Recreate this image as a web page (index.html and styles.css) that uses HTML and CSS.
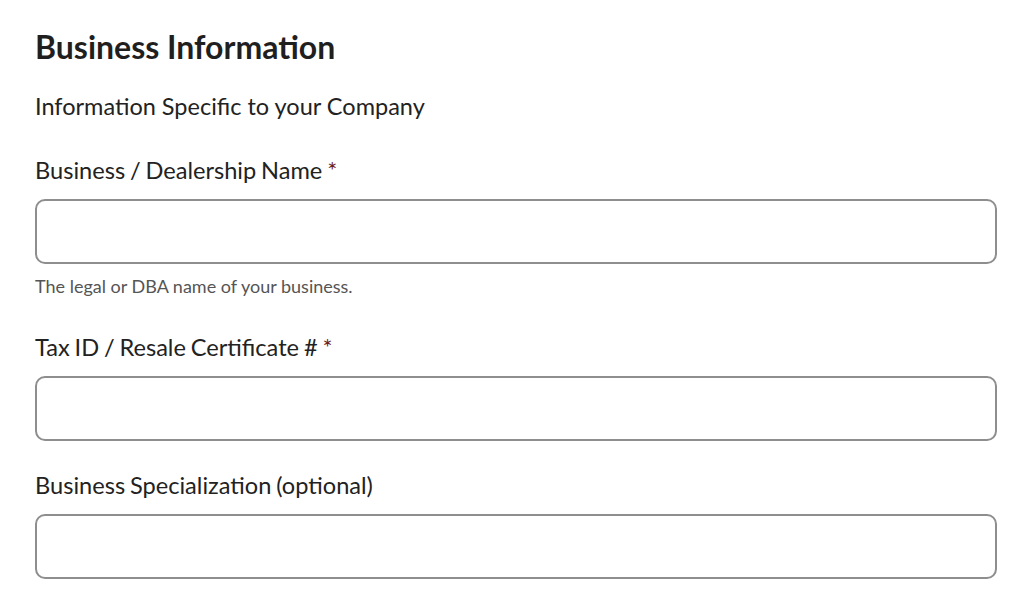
FILE: index.html
```html
<!DOCTYPE html>
<html>
<head>
<meta charset="utf-8">
<link rel="stylesheet" href="styles.css">
</head>
<body>
<main class="form">
  <h1 class="title">Business Information</h1>
  <p class="subtitle">Information Specific to your Company</p>

  <div class="field field-first">
    <label class="label" for="biz">Business / Dealership Name <span class="req">*</span></label>
    <input class="input" id="biz" type="text">
    <p class="help">The legal or DBA name of your business.</p>
  </div>

  <div class="field field-after-help">
    <label class="label" for="tax">Tax ID / Resale Certificate # <span class="req">*</span></label>
    <input class="input" id="tax" type="text">
  </div>

  <div class="field field-after-input">
    <label class="label" for="spec">Business Specialization (optional)</label>
    <input class="input" id="spec" type="text">
  </div>
</main>
</body>
</html>
```

FILE: styles.css
```css
* { box-sizing: border-box; }
html, body {
  margin: 0;
  padding: 0;
  background: #fff;
}
body {
  font-family: Lato, "Noto Sans", sans-serif;
  color: #222;
}
.form {
  padding: 28px 27px 0 35px;
}
.title {
  margin: 0;
  font-size: 32px;
  font-weight: 700;
  line-height: 1.2;
  color: #1f1f1f;
}
.subtitle {
  margin: 25.4px 0 0;
  font-size: 23.5px;
  line-height: 1.2;
}
.field-first { margin-top: 35.8px; }
.field-after-help { margin-top: 35px; }
.field-after-input { margin-top: 29.8px; }
.label {
  display: block;
  font-size: 23.6px;
  line-height: 1.2;
  word-spacing: -1.2px;
}
.req {
  color: #6e1d1d;
}
.input {
  display: block;
  width: 100%;
  height: 65px;
  margin-top: 15px;
  border: 2px solid #8e8e8e;
  border-radius: 10px;
  background: #fff;
  font: inherit;
}
.help {
  margin: 12.2px 0 0;
  font-size: 18px;
  line-height: 1.2;
  color: #555;
}
```
